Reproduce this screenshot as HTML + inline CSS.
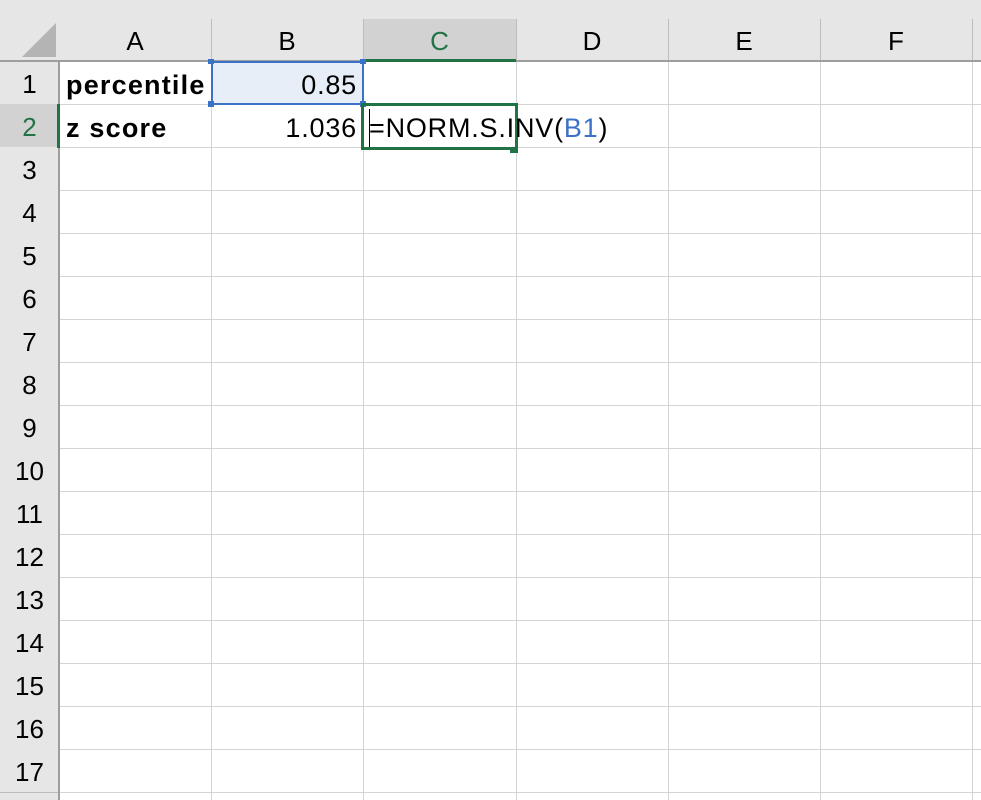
<!DOCTYPE html>
<html><head><style>
*{margin:0;padding:0;box-sizing:border-box}
body{width:981px;height:800px;overflow:hidden;background:#fff;position:relative;font-family:"Liberation Sans",Arial,sans-serif;font-size:27px;color:#000}
.a{position:absolute}
.hl{position:absolute;height:1px;background:#d4d4d4}
.vl{position:absolute;width:1px;background:#d4d4d4}
.ch{position:absolute;top:19px;height:42px;line-height:44px;text-align:center;font-size:26px}
.rh{position:absolute;left:0;width:59px;height:43px;line-height:47px;text-align:center;font-size:26px;background:#e6e6e6}
.t{position:absolute;height:43px;line-height:49px;letter-spacing:0.8px}
</style></head><body>
<div class="a" style="left:0;top:0;width:981px;height:61px;background:#e6e6e6"></div>
<div class="a" style="left:0;top:61px;width:59px;height:739px;background:#e6e6e6"></div>
<div class="a" style="left:363px;top:19px;width:153px;height:42px;background:#d2d2d2"></div>
<div class="a" style="left:0;top:104px;width:59px;height:43px;background:#d2d2d2"></div>
<svg class="a" style="left:0;top:0" width="60" height="60"><polygon points="22,57 56,23 56,57" fill="#b4b4b4"/></svg>
<div id="grid"></div>
<script>
var g='';
var cols=[59,211,363,516,668,820,972];
for(var i=0;i<cols.length;i++){
 g+='<div class="vl" style="left:'+cols[i]+'px;top:61px;height:739px"></div>';
 if(i>0)g+='<div class="vl" style="left:'+cols[i]+'px;top:19px;height:42px;background:#bdbdbd"></div>';
}
for(var r=1;r<=17;r++){
 var y=61+43*r;
 g+='<div class="hl" style="left:59px;top:'+y+'px;width:922px"></div>';
 g+='<div class="hl" style="left:0;top:'+y+'px;width:59px;background:#bdbdbd"></div>';
 g+='<div class="rh" style="top:'+(y-43)+'px;'+(r==2?'background:#d2d2d2;color:#217346':'')+'">'+r+'</div>';
}
document.getElementById('grid').innerHTML=g;
</script>
<div class="a" style="left:0;top:60px;width:981px;height:2px;background:#9e9e9e"></div>
<div class="a" style="left:58px;top:61px;width:2px;height:739px;background:#9e9e9e"></div>
<div class="ch" style="left:59px;width:152px">A</div>
<div class="ch" style="left:211px;width:152px">B</div>
<div class="ch" style="left:363px;width:153px;color:#217346">C</div>
<div class="ch" style="left:516px;width:152px">D</div>
<div class="ch" style="left:668px;width:152px">E</div>
<div class="ch" style="left:820px;width:152px">F</div>
<div class="a" style="left:363px;top:59px;width:153px;height:3px;background:#217346"></div>
<div class="a" style="left:57px;top:104px;width:3px;height:44px;background:#217346"></div>
<div class="a" style="left:211px;top:61px;width:153px;height:44px;background:#e8eef8;border:2px solid #3b72c8"></div>
<div class="a" style="left:208px;top:101px;width:6px;height:6px;background:#3b72c8"></div>
<div class="a" style="left:360px;top:101px;width:6px;height:6px;background:#3b72c8"></div>
<div class="a" style="left:208px;top:59px;width:6px;height:5px;background:#3b72c8"></div>
<div class="a" style="left:360px;top:59px;width:6px;height:5px;background:#3b72c8"></div>
<div class="a" style="left:361px;top:103px;width:157px;height:47px;border:3px solid #217346"></div>
<div class="a" style="left:510px;top:147px;width:8px;height:6px;background:#217346"></div>
<div class="a" style="left:369px;top:109px;width:1px;height:38px;background:#000"></div>
<div class="t" style="left:66px;top:61px;font-weight:bold;letter-spacing:1.2px">percentile</div>
<div class="t" style="left:66px;top:104px;font-weight:bold;letter-spacing:1.2px">z score</div>
<div class="t" style="left:211px;top:61px;width:146px;text-align:right">0.85</div>
<div class="t" style="left:211px;top:104px;width:146px;text-align:right">1.036</div>
<div class="t" style="left:369px;top:104px;white-space:nowrap">=NORM.S.INV(<span style="color:#3b72c8">B1</span>)</div>
</body></html>
